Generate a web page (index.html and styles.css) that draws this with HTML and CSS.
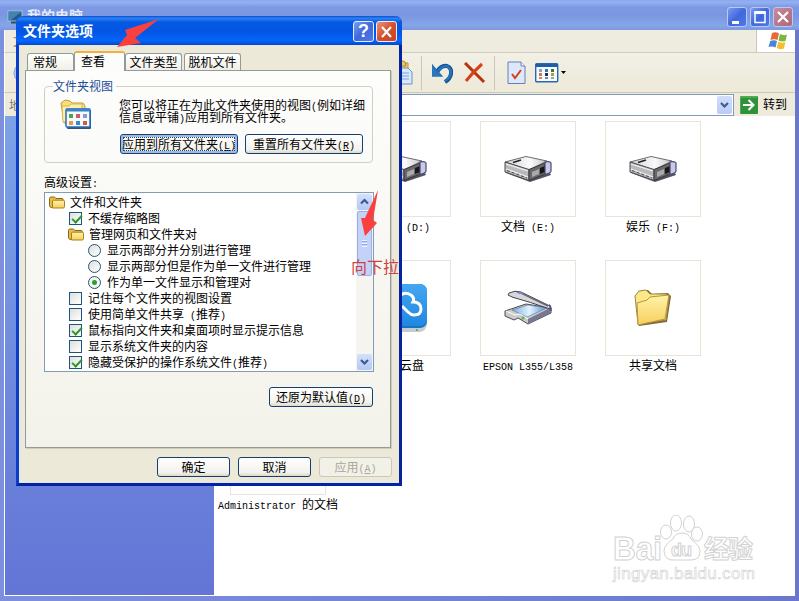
FILE: index.html
```
<!DOCTYPE html>
<html lang="zh-CN">
<head>
  <meta charset="UTF-8">
  <title>我的电脑</title>
  <link rel="stylesheet" href="styles.css">
</head>
<body>
  <!-- shared icons -->
  <svg class="defs" width="0" height="0">
    <defs>
      <linearGradient id="gold" x1="0" y1="0" x2="0" y2="1">
        <stop offset="0" stop-color="#fff3a8"/><stop offset="1" stop-color="#f6cf5e"/>
      </linearGradient>
      <linearGradient id="metal" x1="0" y1="0" x2="1" y2="0">
        <stop offset="0" stop-color="#d2d2d2"/><stop offset=".6" stop-color="#fafafa"/><stop offset="1" stop-color="#c4c4c8"/>
      </linearGradient>
      <linearGradient id="glass" x1="0" y1="0" x2="1" y2="0">
        <stop offset="0" stop-color="#79aee8"/><stop offset=".5" stop-color="#e3f3ff"/><stop offset="1" stop-color="#4c93da"/>
      </linearGradient>
      <linearGradient id="sky" x1="0" y1="0" x2="0" y2="1">
        <stop offset="0" stop-color="#45a6f2"/><stop offset="1" stop-color="#2088e0"/>
      </linearGradient>
      <symbol id="drive" viewBox="0 0 48 28">
        <path d="M1 15 25 23 46 18 47 20 26 27 2 18z" fill="#55525e"/>
        <path d="M1 7 22 1.500 43 6 25 15z" fill="url(#metal)" stroke="#5c5c62" stroke-width=".9"/>
        <path d="M1 7 25 14.500V25.500L1 17z" fill="#b9b9bc" stroke="#4d4d52" stroke-width="1"/>
        <path d="M2 9 24 16M2 14l22 8" stroke="#f1f1f1" stroke-width="1.200"/>
        <path d="M3 15.500l20 7.500" stroke="#45454a" stroke-width="1" stroke-dasharray="3 2"/>
        <path d="M25 14.500 41 8v11l-16 6.500z" fill="#68686d" stroke="#37373c"/>
        <path d="M28 17l7-3v5l-7 3z" fill="#aaa"/>
        <path d="M36 13l5-2v6l-5 2z" fill="#17171b"/>
        <path d="M41 7q5-1 6 1v8q0 2-6 3.500z" fill="#c9c9ec" stroke="#4b4a6c" stroke-width="1.200"/>
        <path d="M9 7.500l8-2.500" stroke="#222" stroke-width="1.600"/>
      </symbol>
      <symbol id="folder" viewBox="0 0 16 13">
        <path d="M.5 2.500Q.5 1 2 1h3.500L7 2.500h6q1.200 0 1.200 1.500v7.500h-12Q.5 11 .5 9.500z" fill="#e9bd45" stroke="#8a6914"/>
        <path d="M3.500 5Q3.700 4.200 4.500 4.200h9.700q1.300 0 1.300 1v5.500q0 1.300-1.300 1.300H3.500z" fill="url(#gold)" stroke="#a8801c"/>
      </symbol>
    </defs>
  </svg>

  <div class="window">
    <div class="titlebar">
      <svg width="17" height="14" viewBox="0 0 17 14">
        <rect x="1" y="1" width="14" height="10" fill="#24588f" stroke="#9cc4e0"/>
        <path d="M2 2h12L4 10H2z" fill="#4383ae"/><path d="M4 12.500h9" stroke="#344d67" stroke-width="2"/>
      </svg>
      <span class="title">我的电脑</span>
      <div class="controls">
        <span class="ctl"><svg width="20" height="20"><path d="M5 14h7v3H5z" fill="#fff"/></svg></span>
        <span class="ctl"><svg width="20" height="20"><path d="M5 5.500h10v10H5z" fill="none" stroke="#fff" stroke-width="1.500"/><path d="M4.300 5.500h11.400" stroke="#fff" stroke-width="3"/></svg></span>
        <span class="ctl ctl-close"><svg width="20" height="20"><path d="M5 5l10 10M15 5L5 15" stroke="#fff" stroke-width="2.200"/></svg></span>
      </div>
    </div>
    <div class="menubar">
      <span class="menu-text">文件</span>
      <div class="flag">
        <svg width="20" height="18" viewBox="0 0 20 18">
          <path d="M4 1q4-1.500 7 .5L9.500 8Q6 6.500 2.500 8z" fill="#e8683a"/>
          <path d="M12 2q4 2 7 .5L17.500 9Q14 10 10.500 8.500z" fill="#76b83c"/>
          <path d="M2.200 9Q6 7.500 9 9L7.500 15.500Q4 14 .5 15z" fill="#4a85d8"/>
          <path d="M10.300 9.700q3.700 1.600 7 .5L16 16.500q-4 1.500-7.300-.5z" fill="#f4be32"/>
        </svg>
      </div>
    </div>
    <div class="toolbar">
      <svg class="back" width="22" height="22"><circle cx="11" cy="11" r="10" fill="#b7c9ea" stroke="#8ba5d8"/></svg>
      <svg class="paste" width="15" height="25" viewBox="0 0 15 25">
        <path d="M0 3h9v20H0z" fill="#efd27c" stroke="#b99136"/><path d="M0 4q2-5 6-2l1 4H0z" fill="#f6cc48" stroke="#a9832d"/>
        <path d="M0 8h9l4 4v12H0z" fill="#d8e9fb" stroke="#6d91c9"/><path d="M0 13h10M0 16h10M0 19h10" stroke="#7ca5db"/>
      </svg>
      <i class="sep"></i>
      <svg class="undo" width="22" height="22" viewBox="0 0 22 22">
        <path d="M6 10Q10 3 16 4q5 2 4 8-1 5-6 8" fill="none" stroke="#174f91" stroke-width="4"/>
        <path d="M6 10Q10 4 16 4q4 2 4 7-1 5-6 8" fill="none" stroke="#2475bd" stroke-width="2.500"/>
        <path d="M1 2v12.500h11z" fill="#1b5da6"/><path d="M1 2l4 6 7 6.500H1z" fill="#2a76bd"/>
      </svg>
      <svg class="delete" width="23" height="22" viewBox="0 0 23 22">
        <path d="M2 1l19 19" stroke="#b9320d" stroke-width="3"/><path d="M19 2Q11 9 3 19" fill="none" stroke="#d6431b" stroke-width="3"/>
      </svg>
      <i class="sep"></i>
      <svg class="props" width="19" height="24" viewBox="0 0 19 24">
        <path d="M1 1h13l4 4v17.500H1z" fill="#dce9fc" stroke="#6a7eb3"/><path d="M14 1v4h4" fill="#fff" stroke="#6a7eb3"/>
        <path d="M5 13l3 4 6-8" fill="none" stroke="#d3401c" stroke-width="2"/>
      </svg>
      <svg class="views" width="32" height="20" viewBox="0 0 32 20">
        <rect x=".7" y=".7" width="22" height="18" rx="1" fill="#f7fafc" stroke="#256ab0" stroke-width="1.400"/>
        <path d="M1 1h22v3H1z" fill="#1e5ea6"/>
        <path d="M4 6h3v3H4z" fill="#80a4d8"/><path d="M10 6h3v3h-3z" fill="#3970b6"/><path d="M16 6h3v3h-3z" fill="#307d3a"/>
        <path d="M4 10h3v3H4z" fill="#d67450"/><path d="M10 10h3v3h-3z" fill="#16325c"/><path d="M16 10h3v3h-3z" fill="#b99648"/>
        <path d="M4 14h3v2H4z" fill="#d6874c"/><path d="M10 14h3v2h-3z" fill="#7584a4"/><path d="M16 14h3v2h-3z" fill="#a8a383"/>
        <path d="M26 8h5l-2.500 3z" fill="#000"/>
      </svg>
    </div>
    <div class="address">
      <span class="addr-label">地址</span>
      <div class="addr-box">
        <span class="dropdown"><svg width="15" height="18"><path d="M4 7l3.500 3.500L11 7" fill="none" stroke="#3f5a8d" stroke-width="2.200"/></svg></span>
      </div>
      <svg width="18" height="18" viewBox="0 0 18 18">
        <rect width="18" height="18" rx="1" fill="#2e9338"/><path d="M0 17V1h17" fill="none" stroke="#79bd77"/>
        <path d="M3 9h10M8.500 4l5 5-5 5" fill="none" stroke="#fff" stroke-width="2"/>
      </svg>
      <span class="go">转到</span>
    </div>
    <div class="content">
      <div class="sidebar"></div>
      <div class="files">
        <div class="file"><div class="thumb"></div></div>
        <div class="file"><div class="thumb"><svg width="48" height="28"><use href="#drive"/></svg></div><span>软件<b> (D:)</b></span></div>
        <div class="file"><div class="thumb"><svg width="48" height="28"><use href="#drive"/></svg></div><span>文档<b> (E:)</b></span></div>
        <div class="file"><div class="thumb"><svg width="48" height="28"><use href="#drive"/></svg></div><span>娱乐<b> (F:)</b></span></div>

        <div class="file"><div class="thumb"></div></div>
        <div class="file"><div class="thumb">
          <svg width="50" height="50" viewBox="0 0 50 50">
            <rect x="1" y="8" width="48" height="41" rx="8" fill="#c5cbd1"/><rect x="1" y="1" width="48" height="44" rx="7" fill="#1a73c4"/>
            <rect x="1" y="1" width="48" height="42" rx="7" fill="url(#sky)"/>
            <path d="M12 29q-6-5 0-11 3-3 7-1 5-10 14-5 4 3 2 7 8 0 8 7 0 6-7 6-3 0-6-3l-6-6" fill="none" stroke="#fff" stroke-width="3"/>
            <circle cx="39" cy="47" r="1" fill="#3ca85a"/>
          </svg></div><span class="disk">百度云盘</span></div>
        <div class="file"><div class="thumb">
          <svg width="48" height="36" viewBox="0 0 48 36">
            <path d="M1 21 22 14 47 18v5L24 34 14 28 10 30 1 26z" fill="#cbcbce" stroke="#4b4b52"/>
            <path d="M8 20 24 15 43 18 23 27z" fill="url(#glass)" stroke="#607488" stroke-width=".6"/>
            <path d="M24 29 46 18v5L24 34z" fill="#77778e"/>
            <path d="M2 21l9 4 5-1 8 5" fill="none" stroke="#fff"/>
            <path d="M5 3q6-3 12-1l29 14v3Q26 12 8 7L4 5z" fill="#d6d6dc" stroke="#44444a"/>
            <path d="M17 3l27 13" stroke="#6a6a72" stroke-width="1.500"/>
            <path d="M12 2h5l3 2h-5z" fill="#7a86d2"/><path d="M45 15q2 0 2 6" fill="none" stroke="#4a489b" stroke-width="1.500"/>
            <circle cx="19" cy="28" r="1.700" fill="#63b85c"/>
          </svg></div><span><b>EPSON L355/L358</b></span></div>
        <div class="file"><div class="thumb">
          <svg width="40" height="38" viewBox="0 0 40 38">
            <path d="M3 8 8 3l7-2 4 4 16-1 3 3-4 26L6 37z" fill="#7d6a35"/>
            <path d="M2 7l4-5 7-1 4 4 16 0 3 3-3 23L5 35z" fill="#fbe889" stroke="#a18432"/>
            <path d="M4 14l10-3 3-3 19-2-4 24L5 36z" fill="url(#gold)" stroke="#b69340"/>
          </svg></div><span>共享文档</span></div>

        <div class="file"><div class="thumb"></div><span><b>Administrator </b>的文档</span></div>
      </div>
    </div>
  </div>

  <div class="dialog">
    <div class="dlg-title">
      <span>文件夹选项</span>
      <div class="controls">
        <span class="ctl">?</span>
        <span class="ctl ctl-close"><svg width="20" height="20"><path d="M5 5l9 10M14 5L5 15" stroke="#fff" stroke-width="2.200"/></svg></span>
      </div>
    </div>
    <div class="dlg-body">
      <div class="tabs">
        <span class="tab first">常规</span>
        <span class="tab active">查看</span>
        <span class="tab">文件类型</span>
        <span class="tab last">脱机文件</span>
      </div>
      <div class="panel">
        <fieldset class="group">
          <legend>文件夹视图</legend>
          <svg class="view-icon" width="34" height="32" viewBox="0 0 34 32">
            <path d="M2 4l4-3 5 1 2 2h11l2 3v17H5z" fill="#f8df7e" stroke="#c29c38"/>
            <path d="M3 7h7l2-2h11v18H4z" fill="#fff0a5" stroke="#d8b654"/>
            <rect x="8" y="11" width="24" height="19" rx="1" fill="#315178"/><rect x="7" y="10" width="24" height="18" rx="1" fill="#f5f8fc" stroke="#2869b8" stroke-width="1.500"/>
            <path d="M7 11h24" stroke="#3b83cc" stroke-width="3"/>
            <path d="M10 15h4v4h-4z" fill="#55a044"/><path d="M17 15h4v4h-4z" fill="#c6606a"/><path d="M24 15h4v4h-4z" fill="#8a9bc4"/>
            <path d="M10 22h4v4h-4z" fill="#e49b3d"/><path d="M17 22h4v4h-4z" fill="#398bc8"/><path d="M24 22h4v4h-4z" fill="#d95838"/>
          </svg>
          <div class="group-main">
            <p>您可以将正在为此文件夹使用的视图<b>(</b>例如详细<br>信息或平铺<b>)</b>应用到所有文件夹。</p>
            <div class="group-btns">
              <button class="btn focus">应用到所有文件夹<b>(<u>L</u>)</b></button>
              <button class="btn">重置所有文件夹<b>(<u>R</u>)</b></button>
            </div>
          </div>
        </fieldset>
        <div class="label">高级设置<b>:</b></div>
        <div class="listbox">
          <ul class="tree">
            <li><svg width="16" height="13"><use href="#folder"/></svg><span>文件和文件夹</span></li>
            <li class="lv1"><i class="check on"></i><span>不缓存缩略图</span></li>
            <li class="lv1"><svg width="16" height="13"><use href="#folder"/></svg><span>管理网页和文件夹对</span></li>
            <li class="lv2"><i class="radio"></i><span>显示两部分并分别进行管理</span></li>
            <li class="lv2"><i class="radio"></i><span>显示两部分但是作为单一文件进行管理</span></li>
            <li class="lv2"><i class="radio on"></i><span>作为单一文件显示和管理对</span></li>
            <li class="lv1"><i class="check"></i><span>记住每个文件夹的视图设置</span></li>
            <li class="lv1"><i class="check"></i><span>使用简单文件共享<b> (</b>推荐<b>)</b></span></li>
            <li class="lv1"><i class="check on"></i><span>鼠标指向文件夹和桌面项时显示提示信息</span></li>
            <li class="lv1"><i class="check"></i><span>显示系统文件夹的内容</span></li>
            <li class="lv1"><i class="check on"></i><span>隐藏受保护的操作系统文件<b>(</b>推荐<b>)</b></span></li>
          </ul>
          <div class="scrollbar">
            <span class="sb-btn"><svg width="15" height="15"><path d="M4 9.500L7.500 6 11 9.500" fill="none" stroke="#3f5a8d" stroke-width="2.200"/></svg></span>
            <span class="sb-thumb"></span>
            <span class="sb-btn sb-down"><svg width="15" height="15"><path d="M4 6l3.500 3.500L11 6" fill="none" stroke="#3f5a8d" stroke-width="2.200"/></svg></span>
          </div>
        </div>
        <button class="btn restore">还原为默认值<b>(<u>D</u>)</b></button>
      </div>
      <div class="dlg-btns">
        <button class="btn">确定</button>
        <button class="btn">取消</button>
        <button class="btn" disabled>应用<b>(<u>A</u>)</b></button>
      </div>
    </div>
  </div>

  <!-- red hints -->
  <svg class="hint hint-tab" width="44" height="30" viewBox="0 0 44 30">
    <path d="M42 0 8 11 10 16 0 28 24 24 18 19z" fill="#f9403f"/>
  </svg>
  <svg class="hint hint-scroll" width="18" height="48" viewBox="0 0 18 48">
    <path d="M17 0 4 28H0L4 46 16 33 12 30z" fill="#f9403f"/>
  </svg>
  <span class="hint hint-text">向下拉</span>

  <div class="watermark">
    <svg width="144" height="50" viewBox="0 0 144 50">
      <g fill="#fff" stroke="#d2d2d2">
        <text class="wm-big" x="0" y="45" textLength="49" lengthAdjust="spacingAndGlyphs">Bai</text>
        <ellipse cx="53" cy="17" rx="5.500" ry="7"/><ellipse cx="63" cy="8" rx="5.500" ry="8"/>
        <ellipse cx="76" cy="9" rx="5.500" ry="8"/><ellipse cx="84" cy="19" rx="5.500" ry="7"/>
        <path d="M69 18q-7 0-9 6-9 6-9 12 1 10 10 9h17q9 0 9-9 0-5-9-12-2-6-9-6z"/>
        <text class="wm-du" x="58" y="41" textLength="21">du</text>
        <text class="wm-cn" x="91" y="43" textLength="49">经验</text>
      </g>
    </svg>
    <span class="wm-url">jingyan.baidu.com</span>
  </div>
</body>
</html>
```
FILE: styles.css
```
* {
  box-sizing: border-box;
}
body {
  margin: 0;
  width: 799px;
  height: 601px;
  overflow: hidden;
  position: relative;
  font-family: "Noto Sans CJK SC", sans-serif;
  font-size: 12px;
  line-height: 16px;
  color: #000;
}
/* half-width characters, 6px each */
b {
  font-family: "Liberation Mono", monospace;
  font-size: 10px;
  font-weight: normal;
  line-height: 0;
  white-space: pre;
}
svg {
  display: block;
  flex: none;
}
.defs {
  position: absolute;
}

/* main window */
.window {
  height: 601px;
  display: flex;
  flex-direction: column;
  padding: 0 4px 5px 4px;
  background: linear-gradient(to right, #7d8fdf, #6b78ca);
}
.titlebar {
  height: 30px;
  margin: 0 -4px;
  padding: 3px 6px 0 7px;
  display: flex;
  align-items: center;
  flex: none;
  background: linear-gradient(#8ba9f0 0, #94b0f2 8%, #7d9ae4 22%, #7b96e0 50%, #84a6e9 85%, #7d97e0 100%);
}
.title {
  margin: -3px 0 0 3px;
  font-size: 14px;
  font-weight: bold;
  color: #e5ebfb;
}
.controls {
  display: flex;
  gap: 3px;
  margin-left: auto;
}
.ctl {
  width: 21px;
  height: 21px;
  border: 1px solid #e6edfc;
  border-radius: 3px;
  background: linear-gradient(135deg, #7c9cf0, #3f68dc 50%, #4f7bea);
  color: #fff;
  text-align: center;
}
.window .ctl {
  width: 20px;
  height: 20px;
  border-color: #bac9f3;
}
.window .ctl svg {
  margin: -1px;
}
.ctl-close {
  background: linear-gradient(135deg, #e99178, #d5502f 50%, #c8421f);
}
.window .ctl-close {
  background: linear-gradient(135deg, #c58b9c, #b0667a);
}
.menubar {
  height: 23px;
  display: flex;
  flex: none;
  background: #eeebdf;
  border-left: 1px solid #fff;
  border-bottom: 1px solid #d0cdbf;
}
.menu-text {
  padding: 3px 0 0 8px;
  color: #777;
}
.flag {
  width: 39px;
  margin-left: auto;
  padding: 2px 0 0 11px;
  background: #fff;
  border-left: 1px solid #c9c6b8;
}
.toolbar {
  height: 40px;
  display: flex;
  align-items: center;
  flex: none;
  background: linear-gradient(#f2f0e6, #edead9);
  border-left: 1px solid #fff;
  border-bottom: 1px solid #cbc8b8;
}
.back {
  margin-left: 8px;
}
.paste {
  margin-left: 364px;
}
.sep {
  width: 1px;
  height: 34px;
  background: #c9c6b7;
}
.paste + .sep {
  margin-left: 7px;
}
.undo {
  margin-left: 9px;
}
.delete {
  margin-left: 10px;
}
.delete + .sep {
  margin-left: 8px;
}
.props {
  margin-left: 12px;
}
.views {
  margin-left: 9px;
}
.address {
  height: 23px;
  display: flex;
  align-items: center;
  flex: none;
  background: #eeebdc;
  border-left: 1px solid #fff;
}
.addr-label {
  width: 40px;
  padding-left: 4px;
  color: #777;
}
.addr-box {
  width: 689px;
  height: 22px;
  margin-right: 6px;
  padding: 1px;
  background: #fff;
  border: 1px solid #7f9db9;
}
.dropdown {
  display: block;
  width: 15px;
  height: 18px;
  margin-left: auto;
  border-radius: 2px;
  background: linear-gradient(#d2defb, #b9cbf6);
}
.go {
  margin: -2px 0 0 5px;
}
.content {
  flex: 1;
  display: flex;
  min-height: 0;
  background: #fff;
  border-left: 1px solid #fff;
  border-bottom: 1px solid #fff;
}
.sidebar {
  width: 209px;
  background: linear-gradient(#7ba2e7, #6375d6);
}
.files {
  padding: 5px 0 0 4px;
  display: grid;
  grid-template-columns: repeat(4, 120px);
  grid-auto-rows: 134px;
  gap: 5px;
  align-content: start;
}
.file {
  display: flex;
  flex-direction: column;
  align-items: center;
  white-space: nowrap;
}
.thumb {
  width: 96px;
  height: 96px;
  display: flex;
  align-items: center;
  justify-content: center;
  margin-bottom: 1px;
  border: 1px solid #e8e5d8;
}
.disk {
  margin-left: -6px;
}

/* folder options dialog */
.dialog {
  position: absolute;
  left: 16px;
  top: 16px;
  width: 386px;
  height: 470px;
  display: flex;
  flex-direction: column;
  border: 3px solid #0a3fc4;
  border-top: 0;
  border-right-color: #0522a0;
  border-bottom-color: #0522a0;
  border-radius: 7px 7px 0 0;
  background: #ece9d8;
}
.dlg-title {
  height: 29px;
  margin: 0 -3px;
  padding: 1px 5px 0 7px;
  display: flex;
  align-items: center;
  flex: none;
  border-radius: 7px 7px 0 0;
  background: linear-gradient(#0a4fce 0, #2b82f4 8%, #0558e2 22%, #0356e3 55%, #0566fb 85%, #0347cb 100%);
  color: #fff;
  font-size: 14px;
  font-weight: bold;
}
.dlg-title > span {
  margin-top: -2px;
}
.dlg-title .ctl {
  font-family: "Liberation Sans", sans-serif;
  font-size: 18px;
  line-height: 19px;
}
.dlg-title .controls {
  gap: 2px;
}
.dlg-body {
  flex: 1;
  display: flex;
  flex-direction: column;
  padding: 6px 8px 0 6px;
  box-shadow: inset 1px -1px 0 #dfe8f5;
}
.tabs {
  height: 19px;
  display: flex;
  align-items: flex-end;
  padding-left: 2px;
  position: relative;
  z-index: 1;
}
.tab {
  width: 57px;
  height: 17px;
  line-height: 16px;
  text-align: center;
  white-space: nowrap;
  background: linear-gradient(#fff, #f0efe6);
  border: 1px solid #919b9c;
  border-bottom: 0;
  border-radius: 3px 3px 0 0;
}
.tab.first {
  width: 47px;
  padding-right: 11px;
}
.tab.active {
  width: 51px;
  height: 20px;
  margin-bottom: -1px;
  padding-right: 13px;
  border-top: 2px solid #f5ae3a;
  background: #fcfcfb;
}
.tab.last {
  margin-left: 2px;
}
.panel {
  height: 378px;
  flex: none;
  display: flex;
  flex-direction: column;
  padding: 7px 17px 0 18px;
  border: 1px solid #919b9c;
  background: linear-gradient(#fdfdfc, #f3f2ea);
  box-shadow: 1px 1px 0 #cfccbd;
}
.group {
  height: 85px;
  flex: none;
  display: flex;
  margin: 0;
  padding: 5px 0 0 14px;
  border: 1px solid #d0d0bf;
  border-radius: 4px;
}
.group legend {
  margin-left: -6px;
  padding: 0 3px 0 0;
  color: #1c4f96;
}
.group-main {
  margin-left: 26px;
}
.group p {
  margin: 0;
  line-height: 12px;
  white-space: nowrap;
}
.group-btns {
  display: flex;
  gap: 7px;
  margin: 11px 0 0 1px;
}
.btn {
  width: 73px;
  height: 20px;
  padding: 0 0 1px;
  font: 12px/16px "Noto Sans CJK SC", sans-serif;
  color: #000;
  white-space: nowrap;
  background: linear-gradient(#fff, #f3f2ec 80%, #dddacb);
  border: 1px solid #14406f;
  border-radius: 3px;
}
.group .btn {
  width: 118px;
}
.focus {
  box-shadow: inset 0 0 0 2px #9ebbec;
  outline: 1px dotted #345;
  outline-offset: -4px;
}
.btn:disabled {
  color: #a9a796;
  border-color: #cbc8b9;
  background: #f2f1e8;
}
.label {
  height: 29px;
  padding-top: 11px;
}
.listbox {
  width: 330px;
  height: 180px;
  flex: none;
  display: flex;
  justify-content: space-between;
  background: #fff;
  border: 1px solid #7f9db9;
}
.tree {
  margin: 0;
  padding: 1px 0 0 4px;
  list-style: none;
}
.tree li {
  height: 16px;
  display: flex;
  align-items: center;
  gap: 5px;
  white-space: nowrap;
}
.tree li span {
  margin-top: -1px;
}
.tree .lv1 {
  padding-left: 19px;
}
.tree .lv2 {
  padding-left: 38px;
}
.check,
.radio {
  width: 13px;
  height: 13px;
  margin: 0 1px;
  border: 1px solid #1f5480;
  background: linear-gradient(135deg, #dedfdb, #fff);
}
.radio {
  border-radius: 50%;
}
.radio.on {
  background: radial-gradient(circle, #2ca02c 2px, #f3f5ee 3px);
}
.check.on::after {
  content: "";
  display: block;
  width: 8px;
  height: 4px;
  margin: 2px 0 0 2px;
  border-left: 2px solid #2a9a2d;
  border-bottom: 2px solid #2a9a2d;
  transform: rotate(-47deg);
}
.scrollbar {
  width: 17px;
  display: flex;
  flex-direction: column;
  gap: 1px;
  padding: 1px;
  background: #f5f4ee;
}
.sb-btn {
  height: 16px;
  border-radius: 2px;
  background: linear-gradient(#d3e0fc, #b5c8f5);
}
.sb-thumb {
  height: 65px;
  padding: 28px 4px;
  border: 1px solid #98b0e4;
  border-radius: 2px;
  background: repeating-linear-gradient(#eef4fe 0 1px, #8ca6df 1px 2px, #c4d4fb 2px 3px) content-box, #c4d2fa;
}
.sb-down {
  margin-top: auto;
}
.restore {
  width: 104px;
  flex: none;
  align-self: flex-end;
  margin: 15px 0 0;
}
.dlg-btns {
  display: flex;
  justify-content: flex-end;
  gap: 8px;
  margin: 9px -1px 0 0;
}

/* hints over both windows */
.hint {
  position: absolute;
}
.hint-tab {
  left: 117px;
  top: 19px;
}
.hint-scroll {
  left: 361px;
  top: 190px;
}
.hint-text {
  left: 351px;
  top: 258px;
  font-size: 16px;
  color: #d33f3d;
}
.watermark {
  position: absolute;
  left: 613px;
  top: 515px;
}
.wm-big {
  font: bold 33px "Liberation Sans", sans-serif;
}
.wm-du {
  font: bold 18px "Liberation Sans", sans-serif;
}
.wm-cn {
  font: bold 25px "Noto Sans CJK SC", sans-serif;
}
.wm-url {
  display: block;
  font: 17px/17px "Liberation Sans", sans-serif;
  letter-spacing: .3px;
  color: #fff;
  -webkit-text-stroke: .6px #d0d0d0;
}
```
